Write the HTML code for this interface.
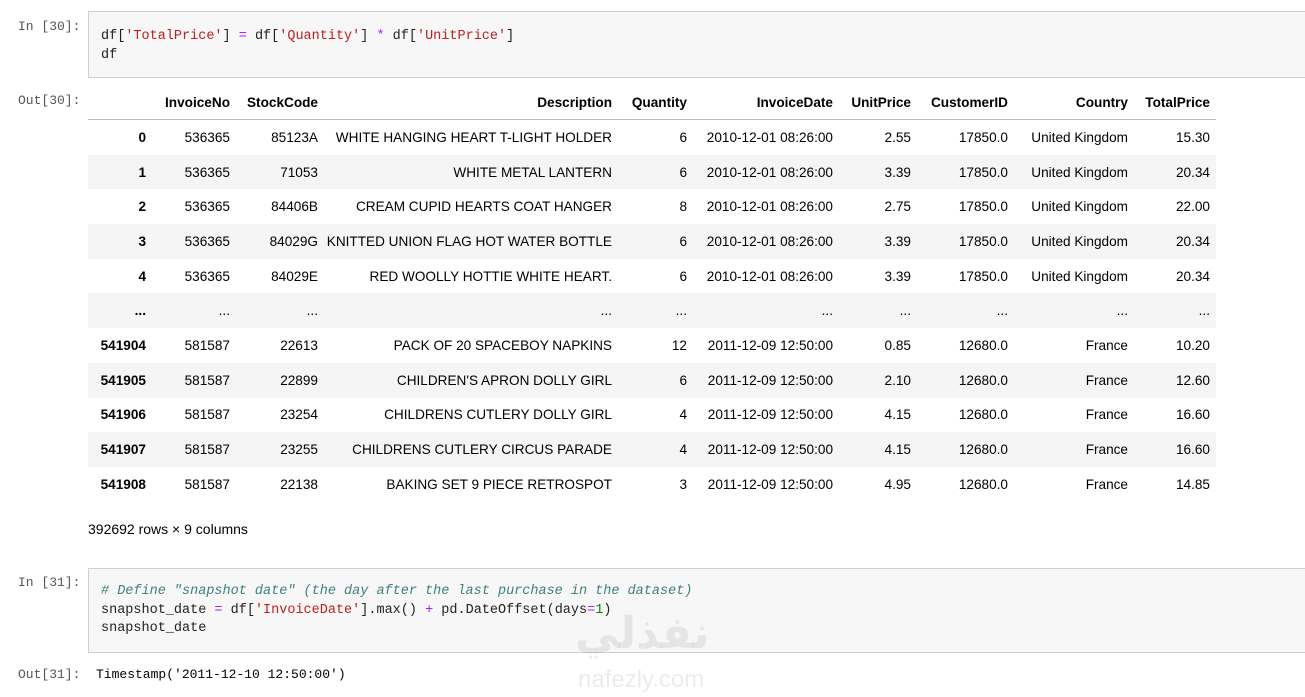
<!DOCTYPE html>
<html><head><meta charset="utf-8"><style>
body{margin:0;width:1305px;height:697px;background:#fff;position:relative;overflow:hidden;font-family:"Liberation Sans",sans-serif;}
.p{position:absolute;font-family:"Liberation Mono",monospace;font-size:13px;color:#555;}
.code{position:absolute;left:88px;width:1230px;background:#f7f7f7;border:1px solid #cfcfcf;font-family:"Liberation Mono",monospace;font-size:13.5px;color:#222;line-height:18.5px;padding:0 12px;box-sizing:border-box;}
.s{color:#ba2121}.o{color:#aa22ff}.b{color:#0055aa}.c{color:#408080;font-style:italic}.n{color:#080}
table{position:absolute;left:88px;top:86px;border-collapse:collapse;table-layout:fixed;font-size:13.6px;color:#000;}
td,th{text-align:right;padding:0 6px 0 0;white-space:nowrap;height:34.7px;overflow:visible;}
th{font-weight:bold;height:33px;}
thead tr{border-bottom:1px solid #bdbdbd;}
tbody tr:nth-child(even){background:#f5f5f5;}
tbody th{font-weight:bold;}
</style></head><body>
<div class="p" style="left:18px;top:19px">In [30]:</div>
<div class="code" style="top:11px;height:67px;padding-top:16px">df[<span class="s">'TotalPrice'</span>] <span class="o">=</span> df[<span class="s">'Quantity'</span>] <span class="o">*</span> df[<span class="s">'UnitPrice'</span>]<br>df</div>
<div class="p" style="left:18px;top:93px">Out[30]:</div>
<table>
<colgroup><col style="width:64px"><col style="width:84px"><col style="width:88px"><col style="width:300px"><col style="width:69px"><col style="width:146px"><col style="width:78px"><col style="width:97px"><col style="width:120px"><col style="width:82px"></colgroup>
<thead><tr><th></th><th>InvoiceNo</th><th>StockCode</th><th style="padding-right:12px">Description</th><th>Quantity</th><th>InvoiceDate</th><th>UnitPrice</th><th>CustomerID</th><th>Country</th><th>TotalPrice</th></tr></thead>
<tbody>
<tr><th>0</th><td>536365</td><td>85123A</td><td style="padding-right:12px">WHITE HANGING HEART T-LIGHT HOLDER</td><td>6</td><td>2010-12-01 08:26:00</td><td>2.55</td><td>17850.0</td><td>United Kingdom</td><td>15.30</td></tr>
<tr><th>1</th><td>536365</td><td>71053</td><td style="padding-right:12px">WHITE METAL LANTERN</td><td>6</td><td>2010-12-01 08:26:00</td><td>3.39</td><td>17850.0</td><td>United Kingdom</td><td>20.34</td></tr>
<tr><th>2</th><td>536365</td><td>84406B</td><td style="padding-right:12px">CREAM CUPID HEARTS COAT HANGER</td><td>8</td><td>2010-12-01 08:26:00</td><td>2.75</td><td>17850.0</td><td>United Kingdom</td><td>22.00</td></tr>
<tr><th>3</th><td>536365</td><td>84029G</td><td style="padding-right:12px">KNITTED UNION FLAG HOT WATER BOTTLE</td><td>6</td><td>2010-12-01 08:26:00</td><td>3.39</td><td>17850.0</td><td>United Kingdom</td><td>20.34</td></tr>
<tr><th>4</th><td>536365</td><td>84029E</td><td style="padding-right:12px">RED WOOLLY HOTTIE WHITE HEART.</td><td>6</td><td>2010-12-01 08:26:00</td><td>3.39</td><td>17850.0</td><td>United Kingdom</td><td>20.34</td></tr>
<tr><th>...</th><td>...</td><td>...</td><td style="padding-right:12px">...</td><td>...</td><td>...</td><td>...</td><td>...</td><td>...</td><td>...</td></tr>
<tr><th>541904</th><td>581587</td><td>22613</td><td style="padding-right:12px">PACK OF 20 SPACEBOY NAPKINS</td><td>12</td><td>2011-12-09 12:50:00</td><td>0.85</td><td>12680.0</td><td>France</td><td>10.20</td></tr>
<tr><th>541905</th><td>581587</td><td>22899</td><td style="padding-right:12px">CHILDREN'S APRON DOLLY GIRL</td><td>6</td><td>2011-12-09 12:50:00</td><td>2.10</td><td>12680.0</td><td>France</td><td>12.60</td></tr>
<tr><th>541906</th><td>581587</td><td>23254</td><td style="padding-right:12px">CHILDRENS CUTLERY DOLLY GIRL</td><td>4</td><td>2011-12-09 12:50:00</td><td>4.15</td><td>12680.0</td><td>France</td><td>16.60</td></tr>
<tr><th>541907</th><td>581587</td><td>23255</td><td style="padding-right:12px">CHILDRENS CUTLERY CIRCUS PARADE</td><td>4</td><td>2011-12-09 12:50:00</td><td>4.15</td><td>12680.0</td><td>France</td><td>16.60</td></tr>
<tr><th>541908</th><td>581587</td><td>22138</td><td style="padding-right:12px">BAKING SET 9 PIECE RETROSPOT</td><td>3</td><td>2011-12-09 12:50:00</td><td>4.95</td><td>12680.0</td><td>France</td><td>14.85</td></tr>
</tbody></table>
<div style="position:absolute;left:88px;top:521px;font-size:14px;color:#000">392692 rows × 9 columns</div>
<div class="p" style="left:18px;top:575px">In [31]:</div>
<div class="code" style="top:568px;height:85px;padding-top:14px"><span class="c"># Define "snapshot date" (the day after the last purchase in the dataset)</span><br>snapshot_date <span class="o">=</span> df[<span class="s">'InvoiceDate'</span>].max() <span class="o">+</span> pd.DateOffset(days<span class="o">=</span><span class="n">1</span>)<br>snapshot_date</div>
<div class="p" style="left:18px;top:667px">Out[31]:</div>
<div class="p" style="left:96px;top:667px;color:#000">Timestamp('2011-12-10 12:50:00')</div>
<div style="position:absolute;left:575px;top:608px;font-family:'DejaVu Sans',sans-serif;font-size:44px;font-weight:bold;color:rgba(0,0,0,0.07)">نفذلي</div>
<div style="position:absolute;left:578px;top:666px;font-size:24px;color:rgba(0,0,0,0.08)">nafezly.com</div>
</body></html>
